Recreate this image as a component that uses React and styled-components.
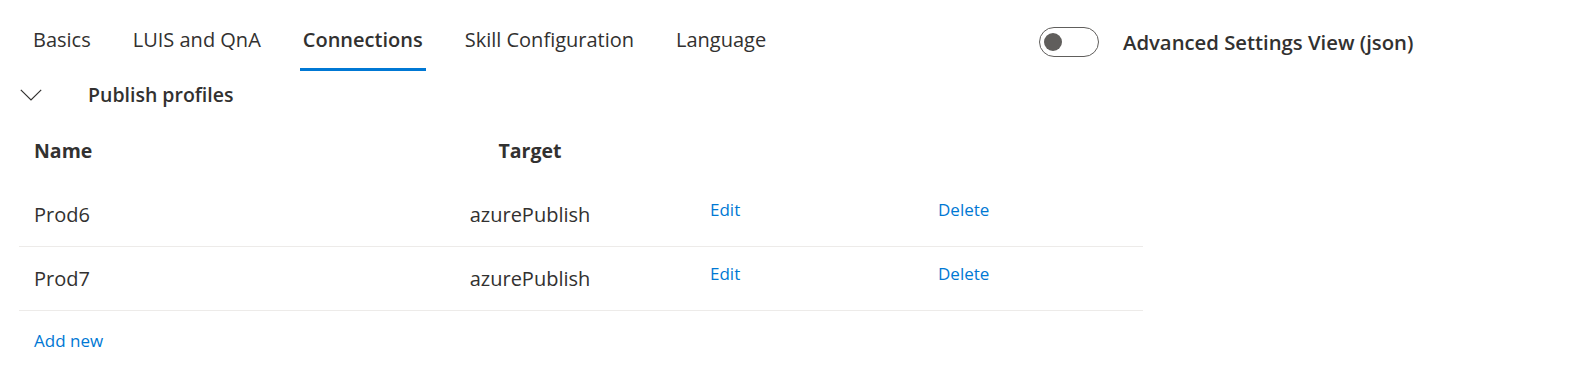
import React, { useState } from "react";
import styled, { createGlobalStyle } from "styled-components";

const GlobalStyle = createGlobalStyle`
  html, body {
    margin: 0;
    padding: 0;
    background: #ffffff;
  }
  body {
    font-family: "Open Sans", "Noto Sans", "Liberation Sans", sans-serif;
    color: #323130;
  }
`;

const Page = styled.div`
  width: 1593px;
  height: 390px;
  display: flex;
  flex-direction: column;
  background: #ffffff;
`;

const Header = styled.div`
  display: flex;
  align-items: flex-start;
  padding-left: 30px;
`;

const Tabs = styled.div`
  flex: 0 0 1009px;
  display: flex;
  gap: 36px;
`;

const Tab = styled.button`
  appearance: none;
  background: none;
  border: 0;
  border-bottom: 3px solid ${(p) => (p.$active ? "#0078d4" : "transparent")};
  padding: 18px 3px 6px;
  margin: 0;
  font-family: inherit;
  font-size: 20px;
  line-height: 44px;
  font-weight: ${(p) => (p.$active ? 600 : 400)};
  color: #323130;
  cursor: pointer;
  white-space: nowrap;
`;

const ToggleGroup = styled.label`
  display: flex;
  align-items: center;
  gap: 24px;
  margin-top: 27px;
  cursor: pointer;
`;

const ToggleTrack = styled.span`
  box-sizing: border-box;
  width: 60px;
  height: 30px;
  border: 1px solid #605e5c;
  border-radius: 15px;
  display: flex;
  align-items: center;
  padding-left: 4px;
`;

const ToggleKnob = styled.span`
  width: 18px;
  height: 18px;
  border-radius: 50%;
  background: #605e5c;
`;

const ToggleLabel = styled.span`
  font-size: 20.3px;
  font-weight: 600;
  color: #323130;
  line-height: 30px;
`;

const SectionHeader = styled.div`
  height: 47px;
  display: flex;
  align-items: center;
  padding-left: 20px;
  gap: 46px;
`;

const SectionTitle = styled.span`
  font-size: 19.5px;
  font-weight: 600;
  line-height: 30px;
  color: #323130;
`;

const Table = styled.div`
  margin-left: 19px;
  width: 1124px;
  display: flex;
  flex-direction: column;
`;

const Row = styled.div`
  box-sizing: border-box;
  display: grid;
  grid-template-columns: 380px 232px 292px 1fr;
  align-items: center;
  padding-left: 15px;
  height: ${(p) => (p.$header ? "65px" : "64px")};
  border-bottom: ${(p) => (p.$header ? "0" : "1px solid #edebe9")};
`;

const HeadCell = styled.div`
  font-size: 19.5px;
  font-weight: 700;
  line-height: 30px;
  color: #323130;
  text-align: ${(p) => (p.$center ? "center" : "left")};
`;

const Cell = styled.div`
  font-size: 20px;
  font-weight: 400;
  line-height: 30px;
  color: #323130;
  text-align: ${(p) => (p.$center ? "center" : "left")};
`;

const LinkCell = styled.div`
  padding-left: ${(p) => p.$indent || 0}px;
  padding-bottom: 9px;
  line-height: 24px;
`;

const LinkButton = styled.button`
  appearance: none;
  background: none;
  border: 0;
  padding: 0;
  margin: 0;
  font-family: inherit;
  font-size: 17px;
  line-height: 24px;
  color: #0078d4;
  cursor: pointer;
`;

const AddRow = styled.div`
  height: 60px;
  display: flex;
  align-items: center;
  padding-left: 34px;
`;

const Chevron = () => (
  <svg width="22" height="12" viewBox="0 0 22 12" aria-hidden="true">
    <polyline
      points="0.8,0.8 11,11 21.2,0.8"
      fill="none"
      stroke="#323130"
      strokeWidth="1.2"
    />
  </svg>
);

const tabs = ["Basics", "LUIS and QnA", "Connections", "Skill Configuration", "Language"];
const profiles = [
  { name: "Prod6", target: "azurePublish" },
  { name: "Prod7", target: "azurePublish" },
];

export default function App() {
  const [active, setActive] = useState("Connections");
  return (
    <>
      <GlobalStyle />
      <Page>
        <Header>
          <Tabs>
            {tabs.map((t) => (
              <Tab key={t} $active={t === active} onClick={() => setActive(t)}>
                {t}
              </Tab>
            ))}
          </Tabs>
          <ToggleGroup>
            <ToggleTrack>
              <ToggleKnob />
            </ToggleTrack>
            <ToggleLabel>Advanced Settings View (json)</ToggleLabel>
          </ToggleGroup>
        </Header>
        <SectionHeader>
          <Chevron />
          <SectionTitle>Publish profiles</SectionTitle>
        </SectionHeader>
        <Table>
          <Row $header>
            <HeadCell>Name</HeadCell>
            <HeadCell $center>Target</HeadCell>
            <div />
            <div />
          </Row>
          {profiles.map((p) => (
            <Row key={p.name}>
              <Cell>{p.name}</Cell>
              <Cell $center>{p.target}</Cell>
              <LinkCell $indent={64}>
                <LinkButton>Edit</LinkButton>
              </LinkCell>
              <LinkCell>
                <LinkButton>Delete</LinkButton>
              </LinkCell>
            </Row>
          ))}
        </Table>
        <AddRow>
          <LinkButton>Add new</LinkButton>
        </AddRow>
      </Page>
    </>
  );
}
